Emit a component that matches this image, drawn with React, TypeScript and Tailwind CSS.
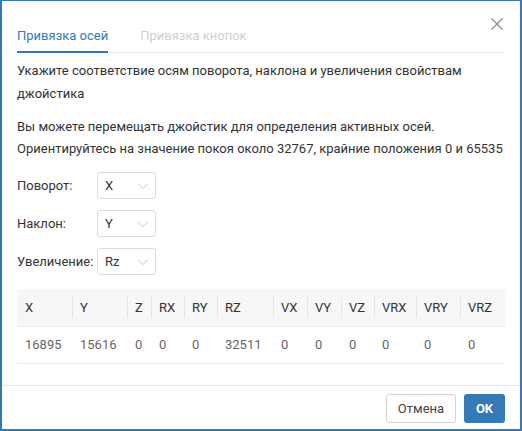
import React from 'react';

const cols = [
  { name: 'X', w: 55, v: '16895' },
  { name: 'Y', w: 55, v: '15616' },
  { name: 'Z', w: 24, v: '0' },
  { name: 'RX', w: 33, v: '0' },
  { name: 'RY', w: 33, v: '0' },
  { name: 'RZ', w: 56, v: '32511' },
  { name: 'VX', w: 34, v: '0' },
  { name: 'VY', w: 34, v: '0' },
  { name: 'VZ', w: 33, v: '0' },
  { name: 'VRX', w: 42, v: '0' },
  { name: 'VRY', w: 44, v: '0' },
  { name: 'VRZ', w: 45, v: '0' },
];

const AxisSelect: React.FC<{ label: string; value: string }> = ({ label, value }) => (
  <div className="flex items-center h-[27px]">
    <span className="w-[80px] shrink-0">{label}</span>
    <div className="w-[59px] h-[27px] border border-[#dcdcdc] rounded-[3px] flex items-center justify-between pl-[7px] pr-[6px]">
      <span className="text-[#333]">{value}</span>
      <svg width="12" height="8" viewBox="0 0 12 8" fill="none" stroke="#c8c8c8" strokeWidth="1">
        <path d="M1 1.5 L6 6.5 L11 1.5" />
      </svg>
    </div>
  </div>
);

export default function App() {
  return (
    <div
      className="relative w-[522px] h-[431px] bg-white border-t border-l-2 border-r-2 border-b-2 border-[#337ab7] text-[13px] text-[#333] flex flex-col"
      style={{ fontFamily: 'Roboto, "Liberation Sans", sans-serif' }}
    >
      <button className="absolute top-[16px] right-[16px] w-[14px] h-[14px] flex items-center justify-center">
        <svg width="12" height="12" viewBox="0 0 12 12" stroke="#8a8a8a" strokeWidth="1.2">
          <path d="M0.5 0.5 L11.5 11.5 M11.5 0.5 L0.5 11.5" />
        </svg>
      </button>

      <div className="px-[15px] flex-1">
        {/* tabs */}
        <div className="flex gap-[32px] border-b border-[#e8e8e8] mt-[25px]">
          <div className="leading-[20px] pb-[5px] border-b-2 border-[#337ab7] text-[#337ab7] -mb-px">Привязка осей</div>
          <div className="leading-[20px] pb-[5px] text-[#cfcfcf]">Привязка кнопок</div>
        </div>

        <p className="mt-[6px] leading-[23px]">
          Укажите соответствие осям поворота, наклона и увеличения свойствам джойстика
        </p>
        <p className="mt-[11px] leading-[22px]">
          Вы можете перемещать джойстик для определения активных осей.
          <br />
          Ориентируйтесь на значение покоя около 32767, крайние положения 0 и 65535
        </p>

        <div className="mt-[12px] flex flex-col gap-[11px]">
          <AxisSelect label="Поворот:" value="X" />
          <AxisSelect label="Наклон:" value="Y" />
          <AxisSelect label="Увеличение:" value="Rz" />
        </div>

        {/* table */}
        <div className="mt-[14px]">
          <div className="flex h-[38px] bg-[#f7f7f7] border-b border-[#ececec]">
            {cols.map((c, i) => (
              <div
                key={c.name}
                className="relative flex items-center pl-[8px] text-[#333]"
                style={{ width: c.w }}
              >
                {i > 0 && <span className="absolute left-0 top-[8px] h-[21px] w-px bg-[#e3e3e3]" />}
                {c.name}
              </div>
            ))}
          </div>
          <div className="flex h-[37px] border-b border-[#ececec]">
            {cols.map((c) => (
              <div
                key={c.name}
                className="flex items-center pl-[8px] text-[#666]"
                style={{ width: c.w }}
              >
                {c.v}
              </div>
            ))}
          </div>
        </div>
      </div>

      {/* footer */}
      <div className="border-t border-[#e8e8e8] h-[44px] flex items-start justify-end gap-[8px] px-[15px] pt-[8px]">
        <button className="h-[29px] w-[70px] border border-[#d4d4d4] rounded-[3px] text-[#444] bg-white">Отмена</button>
        <button className="h-[29px] w-[41px] rounded-[3px] bg-[#337ab7] text-white font-bold">OK</button>
      </div>
    </div>
  );
}
